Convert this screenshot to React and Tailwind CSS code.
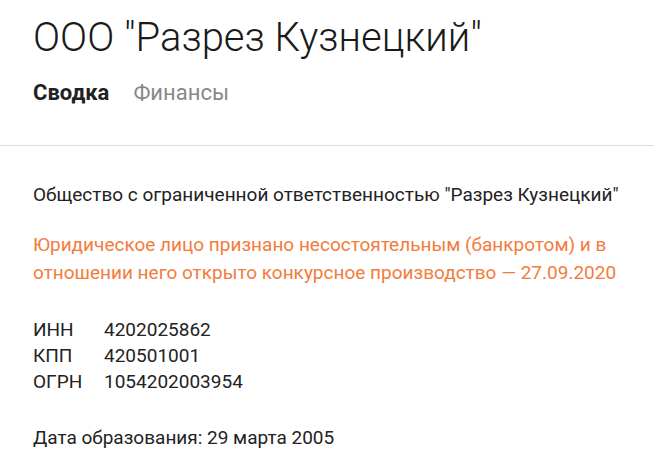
const rows = [
  ["ИНН", "4202025862"],
  ["КПП", "420501001"],
  ["ОГРН", "1054202003954"],
];

export default function App() {
  return (
    <div className="min-h-screen bg-white font-['Roboto',sans-serif] text-[#222]">
      <header className="px-[33px] pt-[14px]">
        <h1 className="text-[40px] font-light leading-[48px] text-[#1a1a1a]">ООО "Разрез Кузнецкий"</h1>
        <nav className="mt-[18px] flex gap-[24px] text-[22px] leading-[26px]">
          <span className="font-bold text-[#222]">Сводка</span>
          <span className="text-[#888]">Финансы</span>
        </nav>
      </header>
      <div className="mt-[39px] border-b border-[#ddd]" />
      <main className="px-[33px] pt-[35px] text-[19px] leading-[28px]">
        <p>Общество с ограниченной ответственностью "Разрез Кузнецкий"</p>
        <p className="mt-[22px] text-[#f27c3c]">
          Юридическое лицо признано несостоятельным (банкротом) и в отношении него открыто конкурсное производство — 27.09.2020
        </p>
        <div className="mt-[30px] leading-[26px]">
          {rows.map(([k, v]) => (
            <div key={k} className="flex">
              <span className="w-[71px]">{k}</span>
              <span>{v}</span>
            </div>
          ))}
        </div>
        <p className="mt-[29px]">Дата образования: 29 марта 2005</p>
      </main>
    </div>
  );
}
